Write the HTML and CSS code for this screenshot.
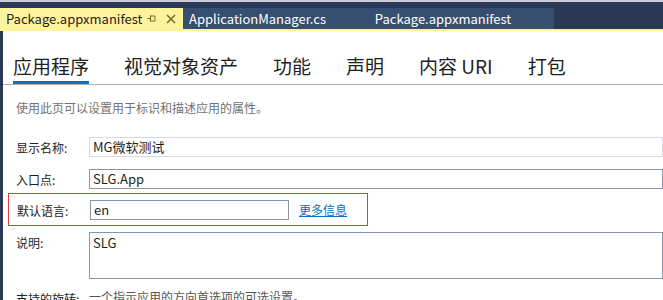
FILE: index.html
```html
<!DOCTYPE html>
<html lang="zh-CN">
<head>
  <meta charset="UTF-8">
  <title>Package.appxmanifest</title>
  <link rel="stylesheet" href="styles.css">
</head>
<body>
  <!-- Document tabs -->
  <div class="doc-tabs">
    <div class="doc-tab active">
      <span class="doc-title">Package.appxmanifest</span>
      <svg class="pin" width="9" height="9" viewBox="0 0 9 9">
        <path d="M0.5 4.5 H3.5 M3.5 1.5 V7.5 M3.5 2 H8 M3.5 7 H8 M8 2 V7" stroke="#7a6a2a" stroke-width="1" fill="none"/>
      </svg>
      <svg class="close" width="10" height="10" viewBox="0 0 10 10">
        <path d="M1 1 L9 9 M9 1 L1 9" stroke="#7a6a2a" stroke-width="1.6"/>
      </svg>
    </div>
    <div class="doc-tab">ApplicationManager.cs</div>
    <div class="doc-tab wide">Package.appxmanifest</div>
  </div>
  <!-- End Document tabs -->

  <div class="editor">
    <ul class="pages">
      <li class="page current">应用程序</li>
      <li class="page">视觉对象资产</li>
      <li class="page">功能</li>
      <li class="page">声明</li>
      <li class="page">内容 URI</li>
      <li class="page">打包</li>
    </ul>

    <p class="hint">使用此页可以设置用于标识和描述应用的属性。</p>

    <div class="row">
      <label>显示名称:</label>
      <div class="field light">MG微软测试</div>
    </div>
    <div class="row">
      <label>入口点:</label>
      <div class="field">SLG.App</div>
    </div>
    <div class="row marked">
      <label>默认语言:</label>
      <div class="field short">en</div>
      <a class="more" href="#">更多信息</a>
    </div>
    <div class="row tall">
      <label>说明:</label>
      <div class="field area">SLG</div>
    </div>
    <div class="row">
      <label>支持的旋转:</label>
      <span class="note">一个指示应用的方向首选项的可选设置。</span>
    </div>
  </div>
</body>
</html>
```

FILE: styles.css
```css
body {
  margin: 0;
  font-family: "Noto Sans CJK SC", "Noto Sans", sans-serif;
  background: #fff;
  color: #1e1e1e;
  overflow: hidden;
}

/* Document tabs */
.doc-tabs {
  display: flex;
  background: #293955;
  border-top: 2px solid #c9cdd9;
  padding-top: 6px;
  border-bottom: 2px solid #fff29d;
}
.doc-tab {
  height: 21px;
  line-height: 21px;
  padding: 0 6px;
  font-size: 13px;
  color: #fff;
  background: #364e6f;
  white-space: nowrap;
}
.doc-tab.active {
  display: flex;
  align-items: center;
  background: #fff29d;
  color: #1e1e1e;
  width: 171px;
}
.doc-title {
  flex: 1;
}
.pin {
  margin-right: 10px;
}
.close {
  margin-right: 1px;
}
.doc-tab.wide {
  width: 210px;
  text-align: center;
}

/* Editor */
.editor {
  border-left: 3px solid #293955;
  height: 270px;
}
.pages {
  list-style: none;
  margin: 0;
  padding: 0 0 0 10px;
  display: flex;
  gap: 35px;
  border-bottom: 1px solid #b4b4b4;
  padding-top: 24px;
}
.page {
  font-size: 19px;
  line-height: 22px;
  padding-bottom: 4px;
  border-bottom: 3px solid transparent;
}
.page.current {
  border-bottom-color: #0e70c0;
}

.hint {
  margin: 14px 0 21px 13px;
  font-size: 12px;
  color: #717171;
}

.row {
  display: flex;
  align-items: flex-start;
  margin-left: 13px;
  margin-bottom: 12px;
  font-size: 12px;
}
.row.tall {
  margin-bottom: 9px;
}
.row label {
  width: 73px;
  padding-top: 2px;
  color: #1e1e1e;
}
.field {
  flex: 1;
  height: 18px;
  line-height: 18px;
  border: 1px solid #8a96a3;
  padding: 0 3px;
  font-size: 13px;
}
.field.light {
  border-color: #d8d8e2;
}
.field.short {
  flex: none;
  width: 191px;
}
.field.area {
  height: 45px;
  line-height: 20px;
}
.marked {
  margin-left: 5px;
  padding: 6px 0 5px 8px;
  border: 1px solid #e83838;
  width: 350px;
  margin-top: -8px;
  margin-bottom: 6px;
}
.more {
  margin-left: 10px;
  color: #0e70c0;
  font-size: 12px;
  padding-top: 1px;
}
.note {
  color: #555;
}
```
